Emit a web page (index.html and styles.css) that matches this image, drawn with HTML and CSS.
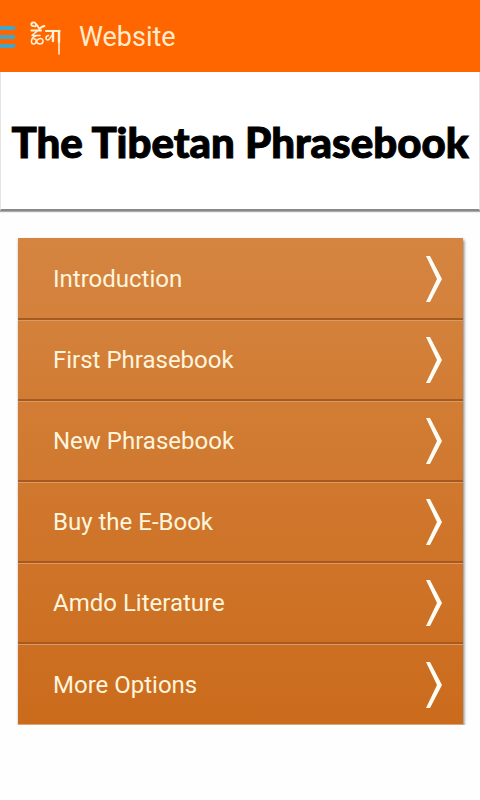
FILE: index.html
```html
<!DOCTYPE html>
<html lang="en">
<head>
<meta charset="utf-8">
<meta name="viewport" content="width=device-width, initial-scale=1">
<title>Website</title>
<link rel="stylesheet" href="styles.css">
</head>
<body>
<header class="bar">
  <button class="drawer" type="button" aria-label="Open menu">
    <svg width="16" height="24" viewBox="0 0 16 24" fill="#43a6c6"><path d="M0 1h15v4H0zM0 10h15v4H0zM0 19h15v4H0z"/></svg>
  </button>
  <svg class="logo" width="34" height="36" viewBox="0 0 34 36" fill="none" stroke="#fff3d6" stroke-linecap="round" stroke-linejoin="round" aria-hidden="true">
    <path stroke-width="1.8" d="M5.500 7C3 7.500 2.500 4 5 3.500C8 3 9 6 7 7.500M7.500 4.500C9.500 6 10.500 8.500 11.500 10.500C12.500 8 14 7.500 16.500 7"/>
    <path stroke-width="2.200" d="M3.500 11.500H13M18 12H31.500"/>
    <path stroke-width="1.500" d="M9 12C7.500 14 5.500 14.500 4 16.500H12M8 17C3 18 2 25 5.500 25C9 25 9 19.500 6 20M8.500 23C9 19 14.500 18.500 15 21.500C15.500 25.500 10.500 26 8.500 23M20.500 16.500C17 17 17.500 21.500 20 21C22 20.500 23 17 25 15M31 12V35"/>
    <path stroke-width="2.400" d="M25 12V22M31 12V23"/>
  </svg>
  <h1 class="bar-title">Website</h1>
</header>
<main>
  <h2 class="banner">The Tibetan Phrasebook</h2>
  <nav class="menu">
    <a class="item" href="#introduction">Introduction<svg class="chevron" width="18" height="46" viewBox="0 0 18 46"><path d="M1 0h4l12 23L5 46H1l11-23z"/></svg></a>
    <a class="item" href="#first">First Phrasebook<svg class="chevron" width="18" height="46" viewBox="0 0 18 46"><path d="M1 0h4l12 23L5 46H1l11-23z"/></svg></a>
    <a class="item" href="#new">New Phrasebook<svg class="chevron" width="18" height="46" viewBox="0 0 18 46"><path d="M1 0h4l12 23L5 46H1l11-23z"/></svg></a>
    <a class="item" href="#buy">Buy the E-Book<svg class="chevron" width="18" height="46" viewBox="0 0 18 46"><path d="M1 0h4l12 23L5 46H1l11-23z"/></svg></a>
    <a class="item" href="#amdo">Amdo Literature<svg class="chevron" width="18" height="46" viewBox="0 0 18 46"><path d="M1 0h4l12 23L5 46H1l11-23z"/></svg></a>
    <a class="item" href="#more">More Options<svg class="chevron" width="18" height="46" viewBox="0 0 18 46"><path d="M1 0h4l12 23L5 46H1l11-23z"/></svg></a>
  </nav>
</main>
</body>
</html>
```
FILE: styles.css
```css
* { box-sizing: border-box; }
body {
  margin: 0;
  background: #fefefe;
  font-family: Roboto, "Liberation Sans", sans-serif;
}
.bar {
  display: flex;
  align-items: center;
  height: 72px;
  padding-top: 2px;
  background: #ff6600;
  color: #ffeccf;
}
.drawer {
  display: flex;
  width: 28px;
  padding: 0;
  border: 0;
  background: none;
}
.logo { margin-right: 17px; }
.bar-title {
  margin: 0;
  font-size: 27px;
  font-weight: 400;
}
.banner {
  display: flex;
  align-items: center;
  justify-content: center;
  height: 139px;
  margin: 0;
  padding-top: 2px;
  border: 1px solid #e4e4e4;
  border-top: 0;
  border-bottom: 2px solid #888;
  box-shadow: 0 1px 1px #aaa;
  background: #fff;
  color: #000;
  font: 900 42px Lato, sans-serif;
  -webkit-text-stroke: 1px #000;
  white-space: nowrap;
}
.menu {
  margin: 27px 17px 0 18px;
  padding-top: 1px;
  background: linear-gradient(#d58541, #cb6b1c);
  box-shadow: 1px 2px 3px #777;
}
.item {
  display: flex;
  align-items: center;
  justify-content: space-between;
  height: 81px;
  padding: 0 20px 0 35px;
  border-top: 1px solid #dc9a61;
  border-bottom: 2px solid #a65a20;
  color: #fff5dd;
  font-size: 24px;
  text-decoration: none;
}
.item:first-child { border-top-color: transparent; }
.item:last-child { border-bottom: 1px solid #dfa474; }
.chevron { fill: #fffdf5; }
```
